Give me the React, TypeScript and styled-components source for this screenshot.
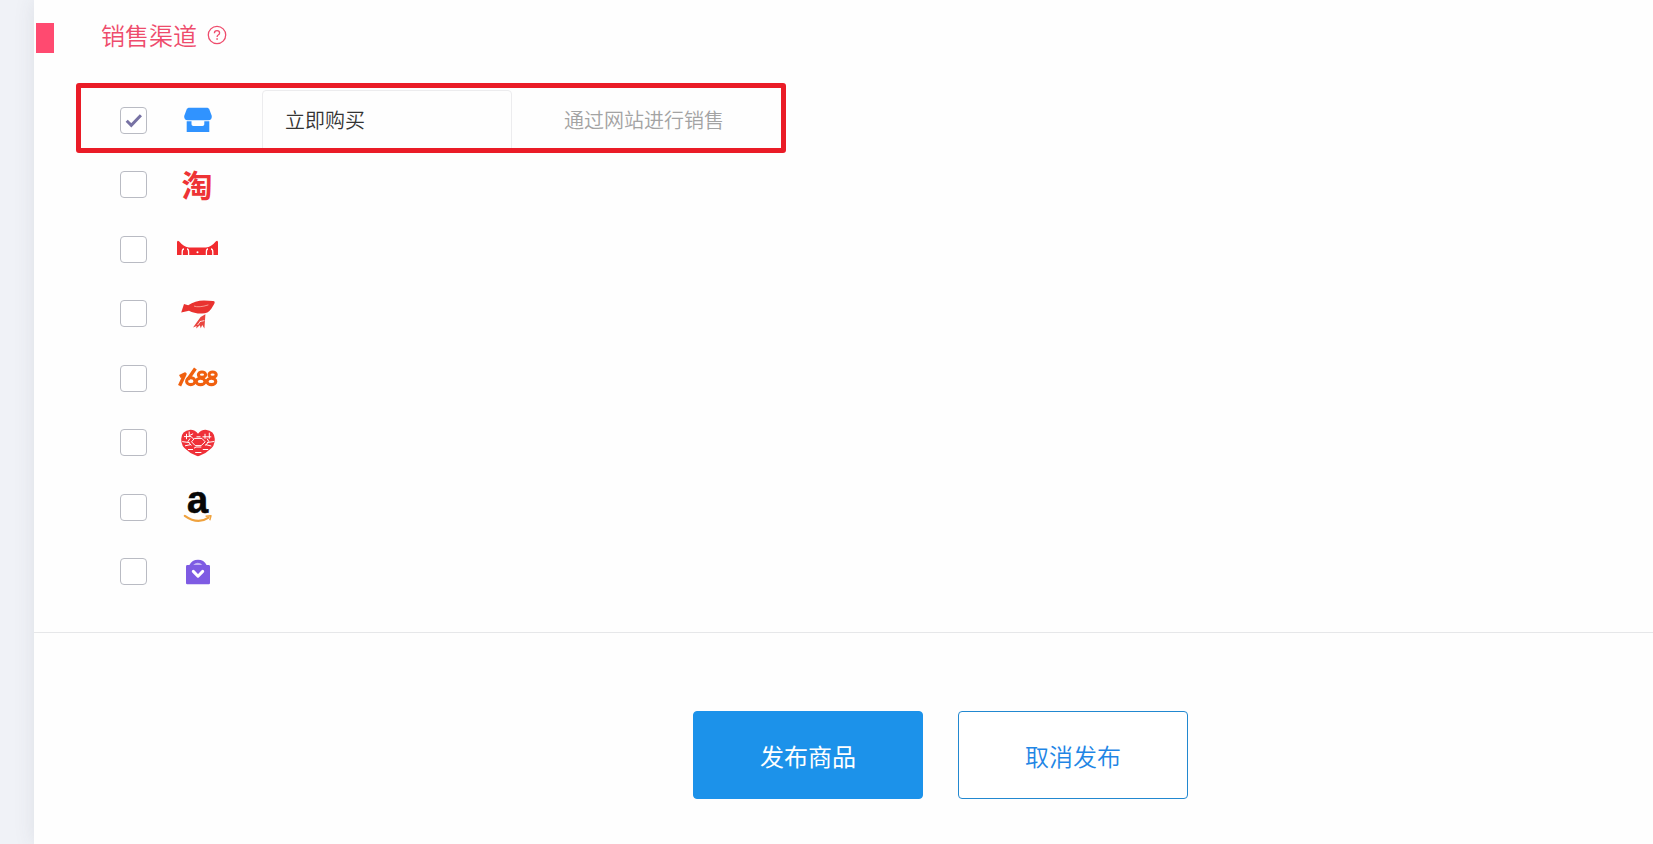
import React from 'react';
import styled, { createGlobalStyle } from 'styled-components';

const GlobalStyle = createGlobalStyle`
  *, *::before, *::after { box-sizing: border-box; }
  body {
    margin: 0;
    background: #f0f2f7;
    font-family: "Noto Sans CJK SC", sans-serif;
    font-weight: 350;
  }
`;

const Page = styled.div`
  min-height: 100vh;
  padding-left: 34px;
  display: flex;
  background: #f0f2f7;
`;

const Panel = styled.main`
  flex: 1;
  background: #fefefe;
  box-shadow: 0 0 20px rgba(60, 65, 80, 0.1);
`;

const Section = styled.section`
  padding: 16px 0 28px;
  border-bottom: 1px solid #e6e7e9;
`;

const Heading = styled.header`
  display: flex;
  align-items: flex-start;
  height: 40px;
  padding-left: 2px;
  color: #ee4c6c;
`;

const Marker = styled.span`
  width: 18px;
  height: 30px;
  margin: 7px 47px 0 0;
  background: #ff4a70;
`;

const Title = styled.h2`
  margin: 0;
  font-size: 24px;
  font-weight: 350;
  line-height: 38px;
`;

const HelpButton = styled.button`
  display: flex;
  align-items: center;
  height: 38px;
  margin-left: 9px;
  padding: 0;
  border: 0;
  background: none;
  color: inherit;
`;

const ChannelList = styled.ul`
  display: grid;
  grid-auto-rows: 1fr;
  height: 516px;
  margin: 32px 0 0;
  padding: 0 0 0 42px;
  list-style: none;
`;

const ChannelRow = styled.li<{ $active?: boolean }>`
  position: relative;
  display: flex;
  align-items: center;
  justify-self: start;
  width: 710px;
  max-width: 100%;
  padding-left: 44px;

  ${({ $active }) =>
    $active &&
    `&::after {
      content: "";
      position: absolute;
      inset: -5px 0 0;
      border: 5px solid #ea1c27;
      border-radius: 3px;
      pointer-events: none;
    }`}
`;

const CheckLabel = styled.label`
  display: flex;
  align-items: center;
  gap: 30px;
`;

const CheckBox = styled.span`
  display: grid;
  width: 27px;
  height: 27px;

  > * { grid-area: 1 / 1; }
  > svg { display: none; pointer-events: none; z-index: 1; }
  > input:checked + svg { display: block; }
`;

const Tick = styled.input`
  appearance: none;
  width: 27px;
  height: 27px;
  margin: 0;
  border: 1px solid #b9bbc3;
  border-radius: 4px;
  background: #fff;
`;

const Icon = styled.svg`
  display: block;
  width: 42px;
  height: 32px;
  overflow: visible;
`;

const NameInput = styled.input`
  align-self: stretch;
  width: 250px;
  margin: 2px 0 0 43px;
  padding: 0 22px 4px;
  border: 1px solid #ececee;
  border-radius: 4px;
  background: transparent;
  color: #333;
  font: inherit;
  font-size: 20px;
`;

const Note = styled.span`
  margin-left: 52px;
  color: #a3a3a3;
  font-size: 20px;
  line-height: 30px;
`;

const Actions = styled.footer`
  display: flex;
  justify-content: center;
  gap: 35px;
  padding: 78px 0 45px 194px;
`;

const ActionButton = styled.button<{ $primary?: boolean }>`
  width: 230px;
  height: 88px;
  padding: 0;
  border: 1px solid ${({ $primary }) => ($primary ? '#1c92ea' : '#2288d0')};
  border-radius: 4px;
  background: ${({ $primary }) => ($primary ? '#1c92ea' : '#fff')};
  color: ${({ $primary }) => ($primary ? '#fff' : '#1f86e5')};
  font: inherit;
  font-size: 24px;
  font-weight: ${({ $primary }) => ($primary ? 400 : 350)};
`;

const StoreIcon = () => (
  <Icon viewBox="0 0 42 32" aria-hidden="true">
    <path d="M11.5 3.7h19l1.6 1 2.7 7.2c.2 2.6-1.2 4.3-3.4 4.3H10.6c-2.2 0-3.6-1.7-3.4-4.3l2.7-7.2z" fill="#3093ff" />
    <path d="M9.7 17.2h4.8v3q0 1.8 1.8 1.8h9.2q1.8 0 1.8-1.8v-3h5V28H9.7z" fill="#3093ff" />
  </Icon>
);

const TaobaoIcon = () => (
  <Icon viewBox="0 0 42 32" aria-hidden="true">
    <text x="20" y="27.5" textAnchor="middle" fontFamily="Noto Sans CJK SC, sans-serif" fontSize="31" fontWeight="700" fill="#ee3335">淘</text>
  </Icon>
);

const TmallIcon = () => (
  <Icon viewBox="0 0 42 32" aria-hidden="true">
    <path d="M0 9.5Q0 7 2 8.2Q7 14.2 12 14.4h17Q34 14.2 39 8.2Q41 7 41 9.5V22H0z" fill="#f12b2f" />
    <path d="M5.2 22v-3q0-3 1.8-3M11.6 22v-3q0-3-1.6-3M29.4 22v-3q0-3 1.6-3M35.8 22v-3q0-3-1.8-3" fill="none" stroke="#fff" strokeWidth="1.3" />
    <circle cx="20.5" cy="19.3" r="1" fill="#fff" />
  </Icon>
);

const JdIcon = () => (
  <Icon viewBox="0 0 42 32" aria-hidden="true">
    <path d="M4.2 14.4 7 6l4.2 1.2Q18 2.6 27 2.5l9 .4Q38.6 3 37.2 6l-2.9 4.7Q31 15.6 25 15.6q-8 .1-13-2.8l-4.4 1z" fill="#e9322f" />
    <path d="M17 8.1q5 1.8 14.4-1.2" fill="none" stroke="#f79a92" strokeWidth="1" />
    <path d="M28.4 16.2 23.6 19 16 29.6l3.6-1.6-.4 2.4 3.6-3.2 1 3 1.4-3.2 2.2 3.4z" fill="#e9453f" />
    <path d="m22.8 23.6 4.6-1M20.6 27l2.8-3.6" stroke="#fff" strokeWidth=".8" />
  </Icon>
);

const Icon1688 = () => (
  <Icon viewBox="0 0 42 32" aria-hidden="true">
    <g fill="none" stroke="#f0600f" strokeWidth="3.1" strokeLinejoin="round">
      <path d="M2.6 23.8 8 12 2.8 14.6M18.4 6.6 10.8 17.4" strokeWidth="3.4" />
      <ellipse cx="13.8" cy="19.2" rx="4.2" ry="3.4" />
      <ellipse cx="25" cy="12.7" rx="3.6" ry="2.7" />
      <ellipse cx="23.6" cy="19.4" rx="4.4" ry="3.2" />
      <ellipse cx="35.6" cy="12.7" rx="3.6" ry="2.7" />
      <ellipse cx="34.4" cy="19.4" rx="4.4" ry="3.2" />
    </g>
  </Icon>
);

const HeartIcon = () => (
  <Icon viewBox="0 0 42 32" aria-hidden="true">
    <path d="M21 6.8Q24 2.7 28.6 2.8q9 .8 9.2 9.3.2 7.4-5.9 11.2-3.1 3.2-7.8 4.8-3.1 2.3-6.2 0-4.7-1.6-7.8-4.8Q4 19.5 4.2 12.1 4.4 3.6 13.4 2.8 18 2.7 21 6.8z" fill="#ef3038" />
    <g fill="none" stroke="#fff" strokeWidth="1">
      <path d="M7 9.6h7l3 2.8M9.5 6.8v5.4M12.2 4.5v4.2l4-2M28 6.8v5M25.5 9.8h8.8M32.3 5.7v6M5.2 14.6l7.2 1M30 15.5l7.3-1M8 18.8l5.6-1.2M34.3 19l-5.8-1.4M11 22.5h5M25.8 22.5h5.4M17 21.2l2-1.2h5.3M18.2 25.5h6.2M13 11.5l-2 3 3.4 4M30 11.5l1.8 3-3.4 4M19.5 9.8h4" />
      <path d="m14.5 14.8 3-3.4h7.4l3.3 3.4-4 3.8h-6z" />
    </g>
    <path d="M18 13h6.5v3.5H18zM16 6.5h2v2h-2zM24.4 7.2h2v1.5h-2z" fill="#ef3038" />
  </Icon>
);

const AmazonIcon = () => (
  <Icon viewBox="0 0 42 32" aria-hidden="true">
    <text x="20.5" y="22" textAnchor="middle" fontFamily="Liberation Sans, sans-serif" fontSize="38" fontWeight="700" fill="#070707" stroke="#070707" strokeWidth=".6">a</text>
    <path d="M7.8 24.8Q20.8 34 31.5 26.6" fill="none" stroke="#efa23e" strokeWidth="2.2" strokeLinecap="round" />
    <path d="m28.6 25.3 5.4-.6-1.2 4.5" fill="none" stroke="#efa23e" strokeWidth="1.4" strokeLinejoin="round" />
  </Icon>
);

const BagIcon = () => (
  <Icon viewBox="0 0 42 32" aria-hidden="true">
    <path d="M9 10.4q0-1.4 1.4-1.4h2Q15 3.8 21 3.8T29.6 9h2q1.4 0 1.4 1.4V27q0 1.2-1.2 1.2H10.2Q9 28.2 9 27z" fill="#7e5be3" />
    <path d="M16.2 9Q20.8 4.7 25.4 9z" fill="#c5b5f4" />
    <path d="m16.3 15.4 4.7 4.8 4.7-4.8" fill="none" stroke="#fff" strokeWidth="3" strokeLinecap="round" strokeLinejoin="round" />
  </Icon>
);

interface Channel {
  label: string;
  icon: React.ComponentType;
  name?: string;
  note?: string;
}

const channels: Channel[] = [
  { label: '网站', icon: StoreIcon, name: '立即购买', note: '通过网站进行销售' },
  { label: '淘宝', icon: TaobaoIcon },
  { label: '天猫', icon: TmallIcon },
  { label: '京东', icon: JdIcon },
  { label: '1688', icon: Icon1688 },
  { label: '拼多多', icon: HeartIcon },
  { label: '亚马逊', icon: AmazonIcon },
  { label: '微店', icon: BagIcon },
];

export default function App() {
  return (
    <>
      <GlobalStyle />
      <Page>
        <Panel>
          <Section>
            <Heading>
              <Marker />
              <Title>销售渠道</Title>
              <HelpButton type="button" aria-label="帮助">
                <svg width="22" height="22" viewBox="0 0 22 22" fill="none" stroke="currentColor" strokeWidth="1.3">
                  <circle cx="11" cy="11" r="8.7" />
                  <path d="M8.4 9.2q0-2.6 2.6-2.6t2.6 2.3q0 1.3-1.4 2.1-1.1.6-1.1 2.1" />
                  <path d="M11.1 14.2v1.6" strokeWidth="1.6" />
                </svg>
              </HelpButton>
            </Heading>
            <ChannelList>
              {channels.map(({ label, icon: ChannelIcon, name, note }) => (
                <ChannelRow key={label} $active={!!name}>
                  <CheckLabel>
                    <CheckBox>
                      <Tick type="checkbox" aria-label={label} defaultChecked={!!name} />
                      <svg width="27" height="27" viewBox="0 0 27 27" fill="none" stroke="#7772a4" strokeWidth="3">
                        <path d="m6.7 13.7 4.6 4.6 9.6-10.1" />
                      </svg>
                    </CheckBox>
                    <ChannelIcon />
                  </CheckLabel>
                  {name && <NameInput type="text" aria-label="按钮名称" defaultValue={name} />}
                  {note && <Note>{note}</Note>}
                </ChannelRow>
              ))}
            </ChannelList>
          </Section>
          <Actions>
            <ActionButton type="button" $primary>发布商品</ActionButton>
            <ActionButton type="button">取消发布</ActionButton>
          </Actions>
        </Panel>
      </Page>
    </>
  );
}
